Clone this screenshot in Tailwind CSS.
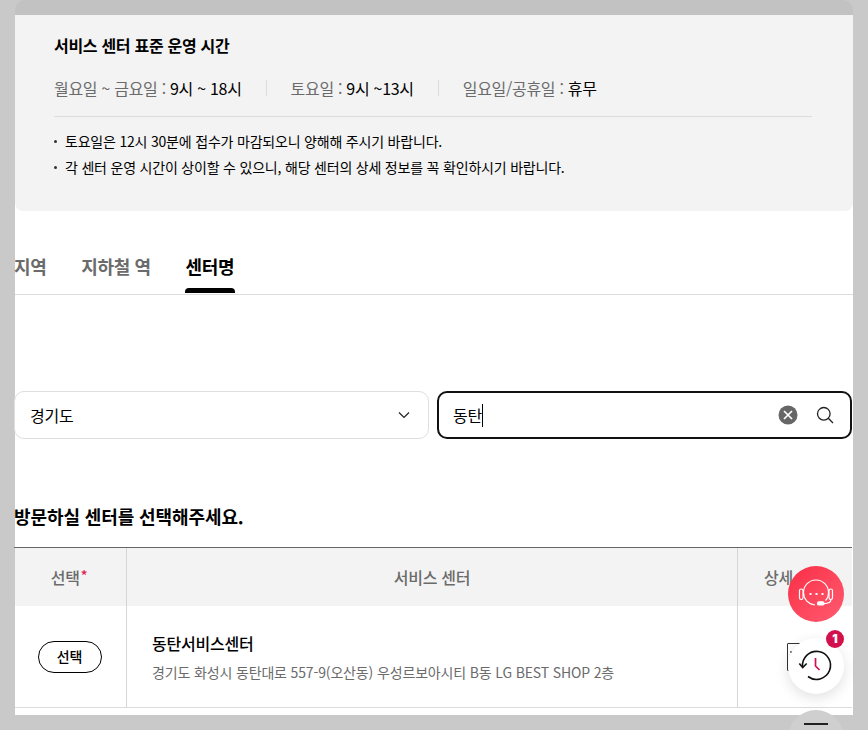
<!DOCTYPE html>
<html lang="ko">
<head>
  <meta charset="UTF-8">
  <title>서비스 센터 선택</title>
  <script src="https://cdn.jsdelivr.net/npm/@tailwindcss/browser@4"></script>
</head>
<body class="bg-[#c9c9c9] font-['Noto_Sans_CJK_KR',sans-serif] text-black overflow-hidden">
  <div class="relative h-[730px] w-[868px] overflow-hidden">
    <div class="ml-[15px] h-[15px] w-[838px] rounded-t-[10px] bg-[#c2c2c2]"></div>
    <main class="ml-[15px] h-[700px] w-[838px] bg-white">

      <!-- 운영 시간 안내 -->
      <section class="h-[196px] rounded-b-[8px] bg-[#f3f3f3] pt-[19px] pl-[39px]">
        <h2 class="text-[16px] leading-[22px] font-bold tracking-[-0.3px]">서비스 센터 표준 운영 시간</h2>
        <div class="mt-[20px] flex h-[24px] items-center text-[16px] tracking-[-0.3px] text-[#6b6b6b]">
          <p>월요일 ~ 금요일 : <span class="text-black">9시 ~ 18시</span></p>
          <span class="mx-[24px] h-[16px] w-px bg-[#dcdcdc]"></span>
          <p>토요일 : <span class="text-black">9시 ~13시</span></p>
          <span class="mx-[24px] h-[16px] w-px bg-[#dcdcdc]"></span>
          <p>일요일/공휴일 : <span class="text-black">휴무</span></p>
        </div>
        <div class="mt-[16px] h-px w-[758px] bg-[#dcdcdc]"></div>
        <ul class="mt-[11px] text-[14px] leading-[26px] tracking-[-0.2px]">
          <li class="flex items-center"><span class="mr-[8px] size-[3px] shrink-0 rounded-full bg-black/80"></span>토요일은 12시 30분에 접수가 마감되오니 양해해 주시기 바랍니다.</li>
          <li class="flex items-center"><span class="mr-[8px] size-[3px] shrink-0 rounded-full bg-black/80"></span>각 센터 운영 시간이 상이할 수 있으니, 해당 센터의 상세 정보를 꼭 확인하시기 바랍니다.</li>
        </ul>
      </section>

      <!-- 탭 -->
      <nav class="mt-[33px] flex h-[51px] gap-[35px] border-b border-[#dcdcdc] text-[18px] leading-[44px] font-bold tracking-[-0.4px] text-[#6b6b6b]">
        <a class="-ml-px">지역</a>
        <a>지하철 역</a>
        <a class="relative text-black">센터명<span class="absolute top-[44px] -right-px -left-px h-[5px] rounded-t-[4px] bg-black"></span></a>
      </nav>

      <!-- 검색 -->
      <div class="mt-[96px] -ml-px flex gap-[8px]">
        <div class="flex h-[48px] w-[415px] items-center justify-between rounded-[10px] border border-[#dedede] pr-[18px] pl-[15px] text-[16px] tracking-[-0.2px]">
          <span>경기도</span>
          <svg class="size-[12px]" viewBox="0 0 12 12" fill="none" stroke="#222" stroke-width="1.200"><path d="M1 3.500 6 8.500l5-5"/></svg>
        </div>
        <div class="flex h-[48px] w-[415px] items-center rounded-[10px] border-2 border-[#111] pr-[16px] pl-[14px] text-[16px] tracking-[-0.2px]">
          <span>동탄</span>
          <span class="h-[23px] w-px bg-black"></span>
          <svg class="ml-auto size-[20px]" viewBox="0 0 20 20"><circle cx="10" cy="10" r="9.500" fill="#666"/><path d="m6 6 8 8m0-8-8 8" stroke="#fff" stroke-width="1.700" fill="none"/></svg>
          <svg class="ml-[18px] size-[18px]" viewBox="0 0 18 18" fill="none" stroke="#222" stroke-width="1.300"><circle cx="7.800" cy="7.800" r="6.300"/><path d="m12.300 12.300 4.700 4.700"/></svg>
        </div>
      </div>

      <!-- 센터 목록 -->
      <h3 class="mt-[64px] -ml-px text-[18px] leading-[26px] font-bold tracking-[-0.1px]">방문하실 센터를 선택해주세요.</h3>
      <div class="mt-[18px] -ml-px h-px w-[838px] bg-[#666]"></div>
      <div class="w-[837px]">
        <div class="grid h-[58px] grid-cols-[112px_611px_114px] items-center bg-[#f3f3f3] text-[16px] font-medium tracking-[-0.3px] text-[#6b6b6b]">
          <div class="flex h-full items-center justify-center border-r border-[#d5d5d5] pr-[3px]">선택<span class="mb-[4px] ml-px text-[14px] text-[#e0204f]">*</span></div>
          <div class="flex h-full items-center justify-center border-r border-[#d5d5d5]">서비스 센터</div>
          <div class="pl-[26px]">상세</div>
        </div>
        <div class="grid h-[102px] grid-cols-[112px_611px_114px] border-b border-[#dcdcdc]">
          <div class="flex items-center justify-center border-r border-[#d5d5d5] pr-[2px]">
            <button class="h-[32px] w-[64px] rounded-full border border-black text-[14px] font-medium tracking-[-0.2px]">선택</button>
          </div>
          <div class="flex flex-col justify-center border-r border-[#d5d5d5] pb-[1px] pl-[25px]">
            <p class="text-[16px] leading-[24px] font-medium tracking-[-0.2px]">동탄서비스센터</p>
            <p class="mt-[7px] text-[14px] leading-[20px] tracking-[-0.15px] text-[#6b6b6b]">경기도 화성시 동탄대로 557-9(오산동) 우성르보아시티 B동 LG BEST SHOP 2층</p>
          </div>
          <div class="pt-[37px] pl-[49px]">
            <span class="relative block h-[28px] w-[22px] rounded-[1px] border-[1.5px] border-[#333]"><span class="absolute top-[7px] left-[2px] size-[2px] bg-[#888]"></span></span>
          </div>
        </div>
      </div>
    </main>

    <!-- 플로팅 버튼 -->
    <button class="absolute top-[566px] left-[788px] size-[56px] rounded-full bg-linear-to-br from-[#fa2a45] to-[#ff5a70]">
      <svg class="size-[56px]" viewBox="0 0 56 56" fill="none" stroke="#fff" stroke-width="1.200">
        <path d="M15.500 26.500a12.500 12.500 0 1 1 25 0c0 3.500-1 6-3 8"/>
        <path d="M15.500 26.500c0 6.500 4.500 11.500 11.500 12.500"/>
        <rect x="11.500" y="23" width="3.500" height="10.500" rx="1.700"/>
        <rect x="41" y="23" width="3.500" height="10.500" rx="1.700"/>
        <path d="M43 33.500c0 2.500-3 4-7 4.200"/>
        <rect x="29.500" y="35.800" width="6.500" height="3.200" rx="1.600" fill="#fff"/>
        <path d="M21.500 28h2m4 0h2m4 0h2" stroke-width="2"/>
      </svg>
    </button>
    <button class="absolute top-[638px] left-[788px] size-[56px] rounded-full bg-white shadow-[0_4px_14px_rgba(0,0,0,0.12)]">
      <svg class="size-[56px]" viewBox="0 0 56 56" fill="none" stroke="#111" stroke-width="1.600">
        <path d="M14.600 29A14 14 0 1 1 20 38.500"/>
        <path d="m11.300 25.500 3.400 4 4-4"/>
        <path d="M27.500 20v8l4 4" stroke="#d3104d" stroke-width="1.700"/>
      </svg>
    </button>
    <span class="absolute top-[630px] left-[826px] flex size-[18px] items-center justify-center rounded-full bg-[#d3104d] font-['Inter',sans-serif] text-[12px] font-black text-white">1</span>
    <div class="absolute top-[710px] left-[788px] size-[56px] rounded-full bg-[#cfcfcf]">
      <span class="absolute top-[13px] left-[16px] h-[2px] w-[24px] bg-[#222]"></span>
    </div>
  </div>
</body>
</html>
